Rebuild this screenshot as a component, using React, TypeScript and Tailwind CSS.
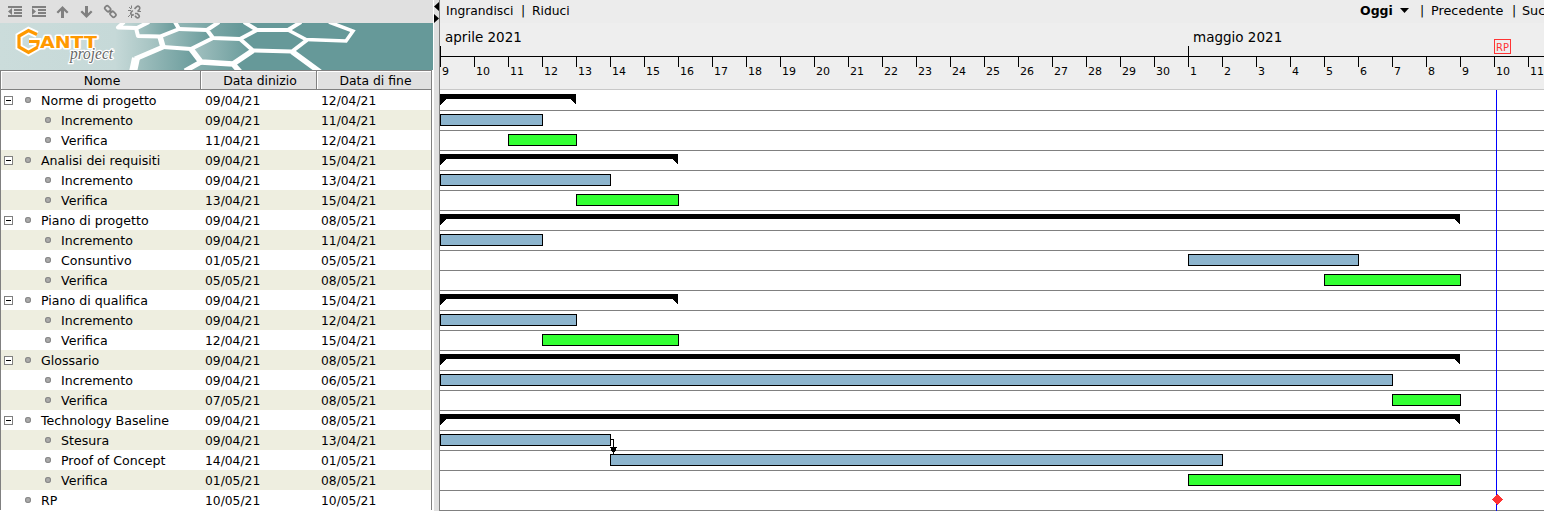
import React from "react";

type Bar = { kind: "group" | "work" | "check"; from: number; to: number };
type Task = { level: 0 | 1; name: string; start: string; end: string; bar?: Bar; group?: boolean };

const DAY = 34;

const g = (name: string, end: string, to: number): Task => ({
  level: 0, name, start: "09/04/21", end, group: true, bar: { kind: "group", from: 0, to },
});
const t = (name: string, start: string, end: string, kind: "work" | "check", from: number, to: number): Task => ({
  level: 1, name, start, end, bar: { kind, from, to },
});

const tasks: Task[] = [
  g("Norme di progetto", "12/04/21", 4),
  t("Incremento", "09/04/21", "11/04/21", "work", 0, 3),
  t("Verifica", "11/04/21", "12/04/21", "check", 2, 4),
  g("Analisi dei requisiti", "15/04/21", 7),
  t("Incremento", "09/04/21", "13/04/21", "work", 0, 5),
  t("Verifica", "13/04/21", "15/04/21", "check", 4, 7),
  g("Piano di progetto", "08/05/21", 30),
  t("Incremento", "09/04/21", "11/04/21", "work", 0, 3),
  t("Consuntivo", "01/05/21", "05/05/21", "work", 22, 27),
  t("Verifica", "05/05/21", "08/05/21", "check", 26, 30),
  g("Piano di qualifica", "15/04/21", 7),
  t("Incremento", "09/04/21", "12/04/21", "work", 0, 4),
  t("Verifica", "12/04/21", "15/04/21", "check", 3, 7),
  g("Glossario", "08/05/21", 30),
  t("Incremento", "09/04/21", "06/05/21", "work", 0, 28),
  t("Verifica", "07/05/21", "08/05/21", "check", 28, 30),
  g("Technology Baseline", "08/05/21", 30),
  t("Stesura", "09/04/21", "13/04/21", "work", 0, 5),
  t("Proof of Concept", "14/04/21", "01/05/21", "work", 5, 23),
  t("Verifica", "01/05/21", "08/05/21", "check", 22, 30),
  { level: 0, name: "RP", start: "10/05/21", end: "10/05/21" },
];

const days = Array.from({ length: 33 }, (_, i) => (i < 22 ? i + 9 : i - 21));

function Toolbar() {
  return (
    <div className="h-[23px] shrink-0 bg-[#e0e0e0]">
      <svg width="150" height="23" className="block" fill="#808080" stroke="none">
        <path d="M8 6h14v2H8zM14 9h8v2h-8zM14 12h8v2h-8zM8 15h14v2H8zM8 11.500l4-3.500v7z" />
        <path d="M32 6h14v2H32zM38 9h8v2h-8zM38 12h8v2h-8zM32 15h14v2H32zM36 11.500l-4-3.500v7z" />
        <path d="M62.500 6l6 6-1.600 1.600L64 10.800V18h-3v-7.200l-2.900 2.800L56.500 12z" />
        <path d="M86.500 18l-6-6 1.600-1.600 2.900 2.800V6h3v7.200l2.900-2.800 1.600 1.600z" />
        <g fill="none" stroke="#808080" strokeWidth="1.700">
          <rect x="-3" y="-2.200" width="6" height="4.400" rx="1.800" transform="translate(107.700 8.700) rotate(45)" />
          <rect x="-3" y="-2.200" width="6" height="4.400" rx="1.800" transform="translate(113 14.300) rotate(45)" />
          <path d="M109 10l3 3" />
          <path d="M134.500 8.800l2-2q1.500-1.200 2.800 0 1.200 1.500 0 2.800l-1.500 1.500M132.800 10.500l-1.500 1.500q-1.200 1.400 0 2.700M135 13.500h2.200l1.800 1.800q.8 1.300-.3 2.200-1.200.7-2.300-.2l-1.400-1.600M131.300 14.700q1.200 1 2.400-.3" />
          <path strokeWidth="1" d="M131.500 5.500v3M129 7l2 2M128 10.500h3M131.500 15v3M130 15l-2 2M137.500 11.500h3.500" />
        </g>
      </svg>
    </div>
  );
}

function Banner() {
  return (
    <svg width="433" height="47" viewBox="0 23 433 47" className="block shrink-0">
      <defs>
        <linearGradient id="sky" gradientUnits="userSpaceOnUse" x1="0" y1="0" x2="240" y2="0">
          <stop offset="0" stopColor="#cbdcdb" />
          <stop offset=".48" stopColor="#c6d9d8" />
          <stop offset=".75" stopColor="#8fb4b3" />
          <stop offset="1" stopColor="#669999" />
        </linearGradient>
        <linearGradient id="cell" x1="0" y1="0" x2="1" y2="0">
          <stop offset="0" stopColor="#a4c2c1" />
          <stop offset="1" stopColor="#669999" />
        </linearGradient>
      </defs>
      <rect y="23" width="433" height="47" fill="url(#sky)" />
      <g fill="url(#cell)">
        <path d="M137 28l11-5h28l3 6-19 7-23 0z" />
        <path d="M160 36l20-7 27 1 6 8-22 11-28-2z" />
        <path d="M134 59l29-12 28 2 10 13-14 8h-53z" />
        <path d="M191 49l22-11h27l13 12-20 14-32-2z" />
      </g>
      <g fill="none" stroke="#fff" strokeWidth="4" strokeLinejoin="round">
        <path d="M124 22L118 27.500 137 28 149 22M136 28L138 36 160 36.500 179 29 175 22" />
        <path d="M179 29L207 30 219 22M207 30L213 38 240 39 257 30 244 22M257 30L288 30 301 22" />
        <path strokeLinejoin="miter" strokeWidth="3.500" d="M288 30L306 39.500 346 41 353 31 329 22" />
        <path d="M240 39L253 50.500 292 51.500 307 40M213 38L191 49 163 47" />
        <path strokeWidth="5.500" d="M160 36.500L163 47M191 49L201 62 233 64 253 50.500M233 64L240 72M292 51.500L320 72" />
        <path strokeWidth="5" d="M163 47L135 59M201 62L185 71" />
        <path strokeWidth="8" d="M136 58L133 72" />
      </g>
      <g fill="none" strokeLinejoin="miter">
        <path d="M37 34.500L28.500 30.500 19 36V47L28.500 52.500 38 47V41.500H29" stroke="#fff" strokeWidth="7" />
        <path d="M37 34.500L28.500 30.500 19 36V47L28.500 52.500 38 47V41.500H29" stroke="#ff9900" strokeWidth="3.200" />
      </g>
      <text x="40" y="47.500" fill="#ff9900" stroke="#fff" strokeWidth="3" paintOrder="stroke" strokeLinejoin="round" fontFamily="'DejaVu Sans', sans-serif" fontWeight="bold" fontSize="15" textLength="57" lengthAdjust="spacingAndGlyphs">ANTT</text>
      <text x="70" y="59" fill="#666" stroke="#fff" strokeWidth="2.500" paintOrder="stroke" fontFamily="'Liberation Serif', serif" fontStyle="italic" fontSize="17" textLength="43" lengthAdjust="spacingAndGlyphs">project</text>
    </svg>
  );
}

function HeadCell({ children, className }: { children: React.ReactNode; className: string }) {
  return (
    <div className={`flex h-5 items-center justify-center border-t border-r border-b border-[#808080] bg-[#e0e0e0] pt-px pl-[3px] text-[12.4px] shadow-[inset_1px_1px_0_#fff] ${className}`}>
      {children}
    </div>
  );
}

function TaskRow({ task, odd }: { task: Task; odd: boolean }) {
  return (
    <div className={`flex h-5 shrink-0 items-center ${odd ? "bg-[#eeeee0]" : "bg-white"}`}>
      <div className="flex w-[204px] items-center">
        <div className="flex w-[24px] shrink-0 pl-[3px]">
          {task.group && (
            <svg width="9" height="9" className="block">
              <rect x=".5" y=".5" width="8" height="8" fill="#fff" stroke="#808080" />
              <path d="M2 4.500h5" stroke="#000" />
            </svg>
          )}
        </div>
        <div className={task.level ? "w-5 shrink-0" : "w-0"} />
        <div className="mr-[10px] h-[6px] w-[6px] shrink-0 rounded-full bg-[#aaa] shadow-[inset_0_0_0_1px_#888]" />
        <span className="pt-[2px] leading-[18px] whitespace-nowrap">{task.name}</span>
      </div>
      <span className="w-[116px] pt-[2px] text-[12.3px] leading-[18px]">{task.start}</span>
      <span className="pt-[2px] text-[12.3px] leading-[18px]">{task.end}</span>
    </div>
  );
}

function BarShape({ bar, y }: { bar: Bar; y: number }) {
  const x = bar.from * DAY;
  const w = (bar.to - bar.from) * DAY;
  if (bar.kind === "group") {
    return <path d={`M${x} ${y + 4}h${w}v11l-6-6h${12 - w}l-6 6z`} fill="#000" />;
  }
  return (
    <rect x={x + 0.5} y={y + 4.5} width={w} height="11" stroke="#000" fill={bar.kind === "work" ? "#8cb4cd" : "#33ff33"} />
  );
}

function Chart() {
  return (
    <svg width="1104" height="421" className="block bg-white" shapeRendering="crispEdges">
      {tasks.map((_, i) => (
        <path key={i} d={`M0 ${i * 20 + 20.5}H1104`} stroke="#808080" />
      ))}
      <path d="M1056.500 0V421" stroke="#0000ff" />
      {tasks.map((task, i) => task.bar && <BarShape key={i} bar={task.bar} y={i * 20} />)}
      <path d="M171 349.500h2.500V364" fill="none" stroke="#000" />
      <path d="M170 357h7l-1.500 4-1 1h-2l-1-1z" fill="#000" />
      <path d="M1057.500 404l5.500 5.500-5.500 5.500-5.500-5.500z" fill="#ff3333" />
    </svg>
  );
}

function Timeline() {
  return (
    <div className="h-[67px] shrink-0 border-b border-[#c8c8c8] bg-[#eeeeee]">
      <div className="flex h-[23px] text-[13.5px] leading-[29px]">
        <span className="w-[748px] pl-[5px]">aprile 2021</span>
        <span className="w-[306px] pl-[5px]">maggio 2021</span>
        <span className="mt-4 flex h-[15px] w-[17px] items-center justify-center border border-[#ff3333] pt-[2px] text-[10px] leading-none text-[#ff3333]">RP</span>
      </div>
      <div className="flex h-[10px]">
        <div className="w-[748px] shrink-0 border-l border-black" />
        <div className="w-[356px] shrink-0 border-l border-black" />
      </div>
      <div className="flex h-[33px] overflow-hidden border-t border-black text-[11px]">
        {days.map((d, i) => (
          <div key={i} className="h-[10px] w-[34px] shrink-0 border-l border-black pl-px leading-[29px]">{d}</div>
        ))}
      </div>
    </div>
  );
}

export default function App() {
  return (
    <div className="flex h-[511px] w-[1544px] overflow-hidden bg-white font-['DejaVu_Sans',sans-serif] text-[12.6px] leading-5 text-black">
      <div className="flex w-[433px] shrink-0 flex-col">
        <Toolbar />
        <Banner />
        <div className="flex w-[432px] shrink-0 border-l border-[#808080]">
          <HeadCell className="w-[200px]">Nome</HeadCell>
          <HeadCell className="w-[116px]">Data dinizio</HeadCell>
          <HeadCell className="w-[115px]">Data di fine</HeadCell>
        </div>
        <div className="flex w-[432px] flex-col border-x border-[#808080]">
          {tasks.map((task, i) => <TaskRow key={i} task={task} odd={i % 2 === 1} />)}
        </div>
      </div>
      <div className="w-[7px] shrink-0 border-r border-l border-l-white border-r-[#808080] bg-[#e0e0e0]">
        <svg width="5" height="24" className="block">
          <path d="M5 2v9L0 6.500zM0 14v9l5-4.500z" />
        </svg>
      </div>
      <div className="flex w-[1104px] shrink-0 flex-col overflow-hidden">
        <div className="flex h-[23px] shrink-0 items-start bg-[#ececec] pt-px pl-[6px] text-[12.5px] whitespace-nowrap">
          <span className="w-[75px] shrink-0 text-[12.3px]">Ingrandisci</span>
          <span className="w-[11px] shrink-0">|</span>
          <span className="w-[828px] shrink-0 text-[12.3px]">Riduci</span>
          <b className="w-[40px] shrink-0">Oggi</b>
          <svg width="9" height="20" className="block shrink-0"><path d="M0 7h9l-4.500 5z" /></svg>
          <span className="ml-[11px] w-[11px] shrink-0">|</span>
          <span className="w-[81px] shrink-0 text-[12.8px]">Precedente</span>
          <span className="w-[10px] shrink-0">|</span>
          <span className="text-[12.8px]">Suc</span>
        </div>
        <Timeline />
        <Chart />
      </div>
    </div>
  );
}
